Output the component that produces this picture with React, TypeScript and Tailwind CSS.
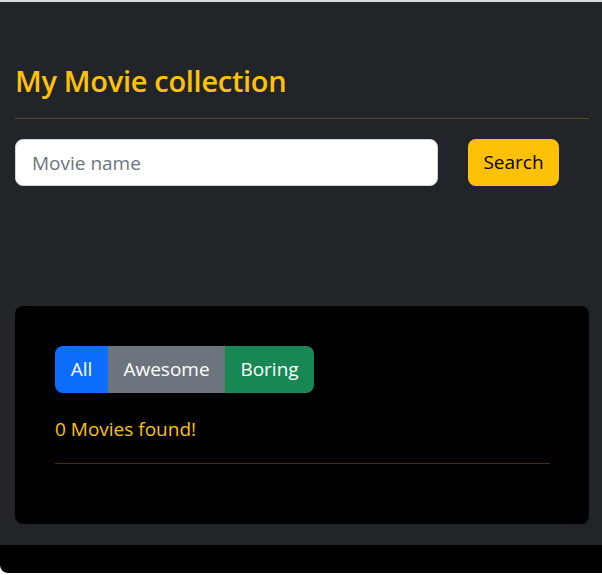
export default function App() {
  const font = { fontFamily: '"Open Sans", "Noto Sans", sans-serif' };
  return (
    <div className="h-[575px] w-[602px] bg-white overflow-hidden" style={font}>
      <div className="h-[2px] bg-[#d9d9d9]" />
      <div className="h-[571px] bg-black rounded-bl-lg overflow-hidden">
        <div className="h-[543px] bg-[#212529] pl-[15px] pr-[13px] flex flex-col">
          <h2 className="mt-[61px] h-[36px] leading-[36px] text-[29px] font-semibold text-[#ffc107] tracking-[-0.3px]">
            My Movie collection
          </h2>
          <div className="mt-[19px] h-px bg-[#584c20]" />
          <div className="mt-[20px] flex items-center gap-[30px]">
            <input
              className="w-[423px] h-[47px] rounded-lg border border-[#ced4da] bg-white px-4 text-[19px] text-[#212529] placeholder:text-[#6c757d] outline-none"
              placeholder="Movie name"
            />
            <button className="w-[91px] h-[47px] rounded-lg bg-[#ffc107] text-[19px] text-black">
              Search
            </button>
          </div>
          <div className="mt-[120px] h-[218px] rounded-lg bg-black pt-[40px] pl-[40px] pr-[39px] flex flex-col">
            <div className="flex h-[47px]">
              <button className="w-[53px] h-full rounded-l-lg bg-[#0d6efd] text-white text-[19px]">All</button>
              <button className="w-[117px] h-full bg-[#6c757d] text-white text-[19px]">Awesome</button>
              <button className="w-[89px] h-full rounded-r-lg bg-[#198754] text-white text-[19px]">Boring</button>
            </div>
            <div className="mt-[21px] h-[30px] leading-[30px] text-[19px] text-[#ffc107]">0 Movies found!</div>
            <div className="mt-[19px] h-px bg-[#403002]" />
          </div>
        </div>
      </div>
    </div>
  );
}
